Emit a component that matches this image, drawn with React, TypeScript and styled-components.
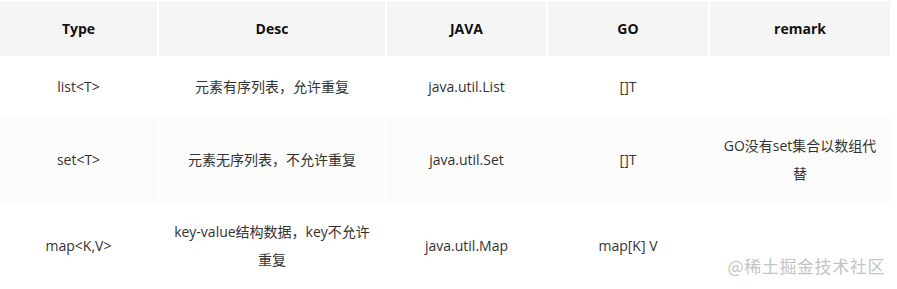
import * as React from 'react'
import styled, { createGlobalStyle } from 'styled-components';

const rows = [
  { type: 'list<T>', desc: '元素有序列表，允许重复', java: 'java.util.List', go: '[]T', remark: '', tall: false },
  { type: 'set<T>', desc: '元素无序列表，不允许重复', java: 'java.util.Set', go: '[]T', remark: 'GO没有set集合以数组代替', tall: true },
  { type: 'map<K,V>', desc: 'key-value结构数据，key不允许重复', java: 'java.util.Map', go: 'map[K] V', remark: '', tall: true },
];

export default () => {
  return (
    <Page>
      <GlobalStyle />
      <Table>
        <Head>Type</Head>
        <Head>Desc</Head>
        <Head>JAVA</Head>
        <Head>GO</Head>
        <Head>remark</Head>
        {rows.map((r, i) => (
          <React.Fragment key={r.type}>
            <Cell striped={i % 2 === 1} tall={r.tall}>{r.type}</Cell>
            <Cell striped={i % 2 === 1} tall={r.tall}><Wrap>{r.desc}</Wrap></Cell>
            <Cell striped={i % 2 === 1} tall={r.tall}>{r.java}</Cell>
            <Cell striped={i % 2 === 1} tall={r.tall}>{r.go}</Cell>
            <Cell striped={i % 2 === 1} tall={r.tall}><Wrap>{r.remark}</Wrap></Cell>
          </React.Fragment>
        ))}
      </Table>
      <Watermark>@稀土掘金技术社区</Watermark>
    </Page>
  );
};

const GlobalStyle = createGlobalStyle`
  html, body {
    margin: 0;
    padding: 0;
    background: #fff;
  }
`;
const Page = styled.div`
  position: relative;
  width: 897px;
  height: 289px;
  overflow: hidden;
  padding-top: 1px;
  box-sizing: border-box;
  font-family: "Open Sans", "Noto Sans CJK SC", sans-serif;
  font-size: 14px;
`;
const Table = styled.div`
  display: grid;
  grid-template-columns: 157px 226px 159px 160px 180px;
  column-gap: 2px;
`;
const Head = styled.div`
  height: 55px;
  display: flex;
  align-items: center;
  justify-content: center;
  background: #f5f5f5;
  font-weight: bold;
  color: #111;
`;
const Cell = styled.div<{ striped: boolean; tall: boolean }>`
  height: ${(p) => (p.tall ? '86px' : '61px')};
  display: flex;
  align-items: center;
  justify-content: center;
  text-align: center;
  line-height: 28px;
  background: ${(p) => (p.striped ? '#fcfcfc' : '#fff')};
  color: #333;
`;
const Wrap = styled.span`
  padding: 0 10px;
`;
const Watermark = styled.div`
  position: absolute;
  right: 12px;
  bottom: 11px;
  font-family: "Noto Sans CJK SC", sans-serif;
  font-size: 17px;
  color: #c4c4c4;
  letter-spacing: 0.6px;
`;
